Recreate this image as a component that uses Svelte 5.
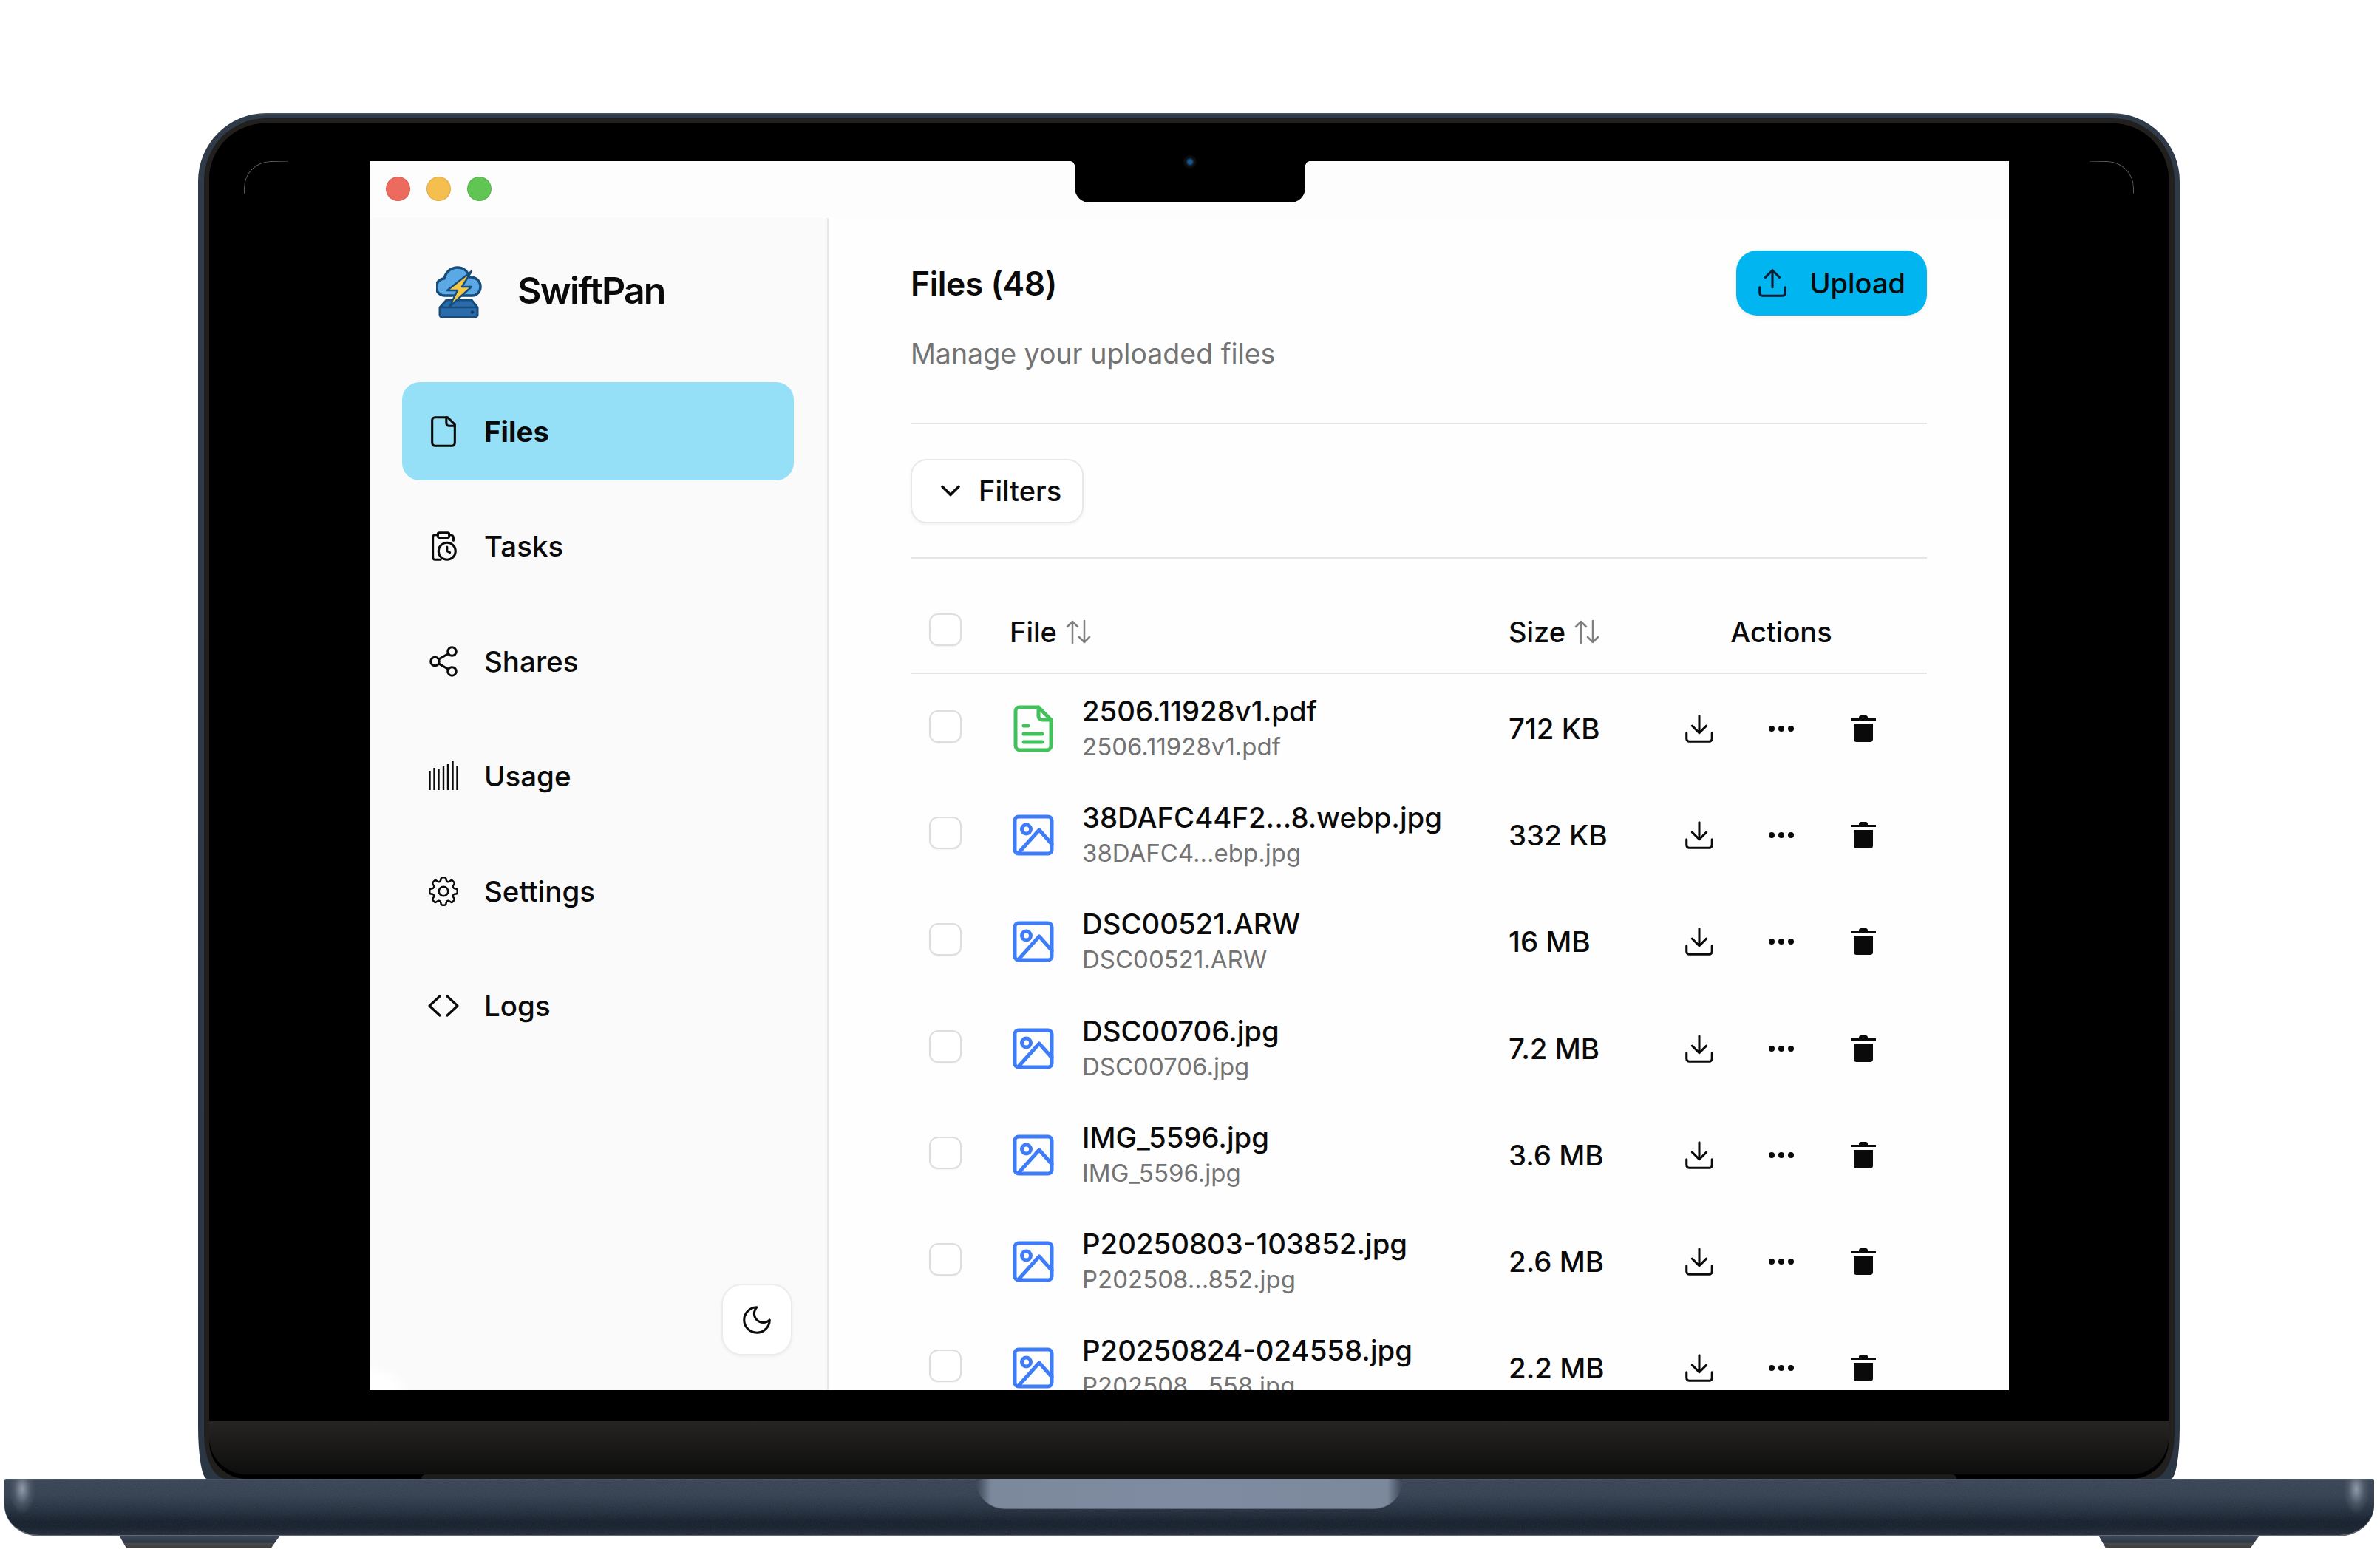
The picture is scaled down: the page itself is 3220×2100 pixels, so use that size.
<script>
  const nav = [
    { key: 'files', label: 'Files', active: true },
    { key: 'tasks', label: 'Tasks' },
    { key: 'shares', label: 'Shares' },
    { key: 'usage', label: 'Usage' },
    { key: 'settings', label: 'Settings' },
    { key: 'logs', label: 'Logs' }
  ];

  const files = [
    { name: '2506.11928v1.pdf', sub: '2506.11928v1.pdf', size: '712 KB', kind: 'doc' },
    { name: '38DAFC44F2...8.webp.jpg', sub: '38DAFC4...ebp.jpg', size: '332 KB', kind: 'image' },
    { name: 'DSC00521.ARW', sub: 'DSC00521.ARW', size: '16 MB', kind: 'image' },
    { name: 'DSC00706.jpg', sub: 'DSC00706.jpg', size: '7.2 MB', kind: 'image' },
    { name: 'IMG_5596.jpg', sub: 'IMG_5596.jpg', size: '3.6 MB', kind: 'image' },
    { name: 'P20250803-103852.jpg', sub: 'P202508...852.jpg', size: '2.6 MB', kind: 'image' },
    { name: 'P20250824-024558.jpg', sub: 'P202508...558.jpg', size: '2.2 MB', kind: 'image' }
  ];

  const usageBars = [
    { x: 1.5, top: 13 }, { x: 7.5, top: 9 }, { x: 13.5, top: 11 }, { x: 20, top: 6 },
    { x: 26, top: 4 }, { x: 32.5, top: 0 }, { x: 38.5, top: 6 }
  ];
</script>

{#snippet navIcon(key)}
  {#if key === 'files'}
    <svg class="ico" width="46" height="46" viewBox="0 0 24 24">
      <path d="M15 2H6a2 2 0 0 0-2 2v16a2 2 0 0 0 2 2h12a2 2 0 0 0 2-2V7Z" />
      <path d="M14 2v4a2 2 0 0 0 2 2h4" />
    </svg>
  {:else if key === 'tasks'}
    <svg class="ico" width="46" height="46" viewBox="0 0 24 24">
      <rect x="8" y="2.5" width="8" height="3.5" rx="1" />
      <path d="M16 4h1a2 2 0 0 1 2 2v2" />
      <path d="M8 4H6a1.500 1.500 0 0 0-1.500 1.500V20A1.500 1.500 0 0 0 6 21.500h4" />
      <circle cx="14.500" cy="15.500" r="6" />
      <path d="M14.500 12.500v3l2 1" />
    </svg>
  {:else if key === 'shares'}
    <svg class="ico" width="46" height="46" viewBox="0 0 24 24">
      <circle cx="18" cy="5" r="3" />
      <circle cx="6" cy="12" r="3" />
      <circle cx="18" cy="19" r="3" />
      <path d="m8.590 13.510 6.830 3.980M15.410 6.510l-6.820 3.980" />
    </svg>
  {:else if key === 'usage'}
    <svg class="bars" width="40" height="40" viewBox="0 0 40 40">
      {#each usageBars as b}
        <line x1={b.x} x2={b.x} y1={b.top} y2="39" />
      {/each}
    </svg>
  {:else if key === 'settings'}
    <svg class="ico thin" width="50" height="50" viewBox="0 0 24 24">
      <path d="M10.343 3.94c.09-.542.56-.94 1.11-.94h1.093c.55 0 1.02.398 1.11.94l.149.894c.07.424.384.764.78.93.398.164.855.142 1.205-.108l.737-.527a1.125 1.125 0 0 1 1.45.12l.773.774c.39.389.44 1.002.12 1.45l-.527.737c-.25.35-.272.806-.107 1.204.165.397.505.71.93.78l.893.15c.543.09.94.559.94 1.109v1.094c0 .55-.397 1.02-.94 1.11l-.894.149c-.424.07-.764.383-.929.78-.165.398-.143.854.107 1.204l.527.738c.32.447.269 1.06-.12 1.45l-.774.773a1.125 1.125 0 0 1-1.449.12l-.738-.527c-.35-.25-.806-.272-1.203-.107-.398.165-.71.505-.781.929l-.149.894c-.09.542-.56.94-1.11.94h-1.094c-.55 0-1.019-.398-1.11-.94l-.148-.894c-.071-.424-.384-.764-.781-.93-.398-.164-.854-.142-1.204.108l-.738.527c-.447.32-1.06.269-1.45-.12l-.773-.774a1.125 1.125 0 0 1-.12-1.45l.527-.737c.25-.35.272-.806.108-1.204-.165-.397-.506-.71-.93-.78l-.894-.15c-.542-.09-.94-.56-.94-1.109v-1.094c0-.55.398-1.02.94-1.11l.894-.149c.424-.07.765-.383.93-.78.165-.398.143-.854-.108-1.204l-.526-.738a1.125 1.125 0 0 1 .12-1.45l.773-.773a1.125 1.125 0 0 1 1.45-.12l.737.527c.35.25.807.272 1.204.107.397-.165.71-.505.78-.929l.15-.894Z" />
      <circle cx="12" cy="12" r="3" />
    </svg>
  {:else if key === 'logs'}
    <svg class="ico" width="44" height="44" viewBox="0 0 44 44">
      <path d="M17 9 3 22l14 13M27 9l14 13-14 13" stroke-width="3.200" />
    </svg>
  {/if}
{/snippet}

{#snippet sortIcon()}
  <svg class="sort" width="34" height="32" viewBox="0 0 34 32">
    <path d="M9 31V2M2 9l7-7 7 7M25 1v29M18 23l7 7 7-7" />
  </svg>
{/snippet}

<div class="stage">
  <div class="lid">
    <div class="gasket">
      <div class="bezel">
        <div class="glass">
          <span class="arc left"></span>
          <span class="arc right"></span>
          <div class="window">
            <span class="notch"></span>
            <div class="titlebar">
              <span class="light red"></span>
              <span class="light yellow"></span>
              <span class="light green"></span>
            </div>
            <div class="app">
              <aside class="sidebar">
                <div class="brand">
                  <svg class="logo" width="62" height="70" viewBox="0 0 62 70">
                    <path d="M14 46h34l8 10v10a3 3 0 0 1-3 3H8a3 3 0 0 1-3-3V56Z" fill="#2a6cab" stroke="#174d7c" stroke-width="3" stroke-linejoin="round" />
                    <path d="M6 56h49" stroke="#174d7c" stroke-width="2.500" />
                    <circle cx="49" cy="62.500" r="2.200" fill="#123c60" />
                    <path d="M12 40a11.500 11.500 0 0 1-1-23C13 8 20 2 29 2c8 0 14 5 16 13 8-1 15 5 15 13 0 7-5 12-11 12Z" fill="#5aa8e4" stroke="#174d7c" stroke-width="3.500" stroke-linejoin="round" />
                    <path d="M48 7 15 33h14L18 55l30-27H35Z" fill="#f6c744" stroke="#174d7c" stroke-width="2.400" stroke-linejoin="round" />
                  </svg>
                  <span class="wordmark">SwiftPan</span>
                </div>
                <nav>
                  {#each nav as item}
                    <a class="nav-item" class:active={item.active} href="#{item.key}">
                      <span class="nav-icon">{@render navIcon(item.key)}</span>
                      <span>{item.label}</span>
                    </a>
                  {/each}
                </nav>
                <button class="theme" aria-label="Toggle theme">
                  <svg class="ico" width="46" height="46" viewBox="0 0 24 24">
                    <path d="M12 3a6 6 0 0 0 9 9 9 9 0 1 1-9-9Z" />
                  </svg>
                </button>
              </aside>

              <main class="main">
                <header class="page-head">
                  <div class="title-row">
                    <h1>Files (48)</h1>
                    <button class="upload">
                      <svg class="ico navy" width="46" height="46" viewBox="0 0 24 24">
                        <path d="M12 15V3M7 8l5-5 5 5M3 15v4a2 2 0 0 0 2 2h14a2 2 0 0 0 2-2v-4" />
                      </svg>
                      <span>Upload</span>
                    </button>
                  </div>
                  <p class="subtitle">Manage your uploaded files</p>
                </header>

                <div class="filter-bar">
                  <button class="filters">
                    <svg class="ico heavy" width="44" height="44" viewBox="0 0 24 24"><path d="m6 9 6 6 6-6" /></svg>
                    <span>Filters</span>
                  </button>
                </div>

                <div class="table-head grid">
                  <span class="check-cell"><span class="check"></span></span>
                  <span class="th">File {@render sortIcon()}</span>
                  <span class="th">Size {@render sortIcon()}</span>
                  <span class="th center">Actions</span>
                </div>

                {#each files as f}
                  <div class="row grid">
                    <span class="check-cell"><span class="check"></span></span>
                    <div class="file">
                      <span class="file-icon">
                        {#if f.kind === 'doc'}
                          <svg width="56" height="64" viewBox="0 0 56 64" fill="none" stroke="#43c15c" stroke-width="5" stroke-linecap="round" stroke-linejoin="round">
                            <path d="M9 3h26l17 17v35a6 6 0 0 1-6 6H10a6 6 0 0 1-6-6V8a5 5 0 0 1 5-5Z" />
                            <path d="M35 3v12a5 5 0 0 0 5 5h12" />
                            <path d="M15 28h6M15 39h25M15 50h25" />
                          </svg>
                        {:else}
                          <svg width="56" height="56" viewBox="0 0 56 56" fill="none" stroke="#3f7cf7" stroke-width="5" stroke-linecap="round" stroke-linejoin="round">
                            <rect x="3" y="3" width="50" height="50" rx="5" />
                            <circle cx="18.500" cy="20" r="6" />
                            <path d="M8 52 36 21l17 19" />
                          </svg>
                        {/if}
                      </span>
                      <div class="names">
                        <span class="name">{f.name}</span>
                        <span class="sub">{f.sub}</span>
                      </div>
                    </div>
                    <span class="size">{f.size}</span>
                    <div class="actions">
                      <span class="act">
                        <svg class="ico" width="46" height="46" viewBox="0 0 24 24">
                          <path d="M12 3v12M7 10l5 5 5-5M3 15v4a2 2 0 0 0 2 2h14a2 2 0 0 0 2-2v-4" />
                        </svg>
                      </span>
                      <span class="act">
                        <svg width="36" height="10" viewBox="0 0 36 10" fill="#0a0a0a">
                          <circle cx="5" cy="5" r="4" /><circle cx="18" cy="5" r="4" /><circle cx="31" cy="5" r="4" />
                        </svg>
                      </span>
                      <span class="act">
                        <svg width="34" height="36" viewBox="0 0 34 36" fill="#0a0a0a">
                          <path d="M11 4V3a3 3 0 0 1 3-3h6a3 3 0 0 1 3 3v1h11v3H0V4Z" />
                          <path d="M4 11h26v21a4 4 0 0 1-4 4H8a4 4 0 0 1-4-4Z" />
                        </svg>
                      </span>
                    </div>
                  </div>
                {/each}
              </main>
            </div>
          </div>
          <span class="camera"></span>
        </div>
        <div class="chin"></div>
        <span class="lip"></span>
      </div>
    </div>
  </div>

  <div class="base">
    <svg class="grain" width="3206" height="78">
      <filter id="grain-noise">
        <feTurbulence type="fractalNoise" baseFrequency="0.7" numOctaves="2" />
        <feColorMatrix values="0 0 0 0 1  0 0 0 0 1  0 0 0 0 1  0.9 0 0 0 -0.25" />
      </filter>
      <rect width="3206" height="78" filter="url(#grain-noise)" />
    </svg>
    <span class="shine left"></span>
    <span class="shine right"></span>
    <span class="thumb"></span>
  </div>
  <div class="feet">
    <span class="foot"></span>
    <span class="foot"></span>
  </div>
</div>

<style>
  :global(body) {
    margin: 0;
    background: #fff;
  }

  .stage {
    width: 3220px;
    height: 2100px;
    padding-top: 153px;
    box-sizing: border-box;
    overflow: hidden;
    background: #fff;
    font-family: Inter, "Liberation Sans", sans-serif;
    color: #0a0a0a;
  }

  /* laptop shell */
  .lid {
    margin-left: 268px;
    width: 2681px;
    height: 1848px;
    box-sizing: border-box;
    padding: 7px 7px 0 8px;
    border-radius: 92px 92px 12px 12px / 92px 92px 70px 70px;
    background: linear-gradient(180deg, #4a5564 0, #303b49 3px, #2b3644 100%);
  }

  .gasket {
    height: 100%;
    box-sizing: border-box;
    padding: 7px 8px 0 7px;
    border-radius: 84px 84px 30px 30px / 84px 84px 60px 60px;
    background: #22201e;
  }

  .bezel {
    position: relative;
    height: 100%;
    display: flex;
    flex-direction: column;
    border-radius: 76px 76px 50px 50px / 76px 76px 50px 50px;
    overflow: hidden;
    background: #000;
  }

  .glass {
    position: relative;
    height: 1756px;
    flex: none;
    box-sizing: border-box;
    padding: 51px 216px 42px 217px;
    background: #000;
  }

  .camera {
    position: absolute;
    left: 1318px;
    top: 43px;
    width: 18px;
    height: 18px;
    border-radius: 50%;
    background: radial-gradient(circle, #17568f 0 20%, #0d1014 45%, #060708 80%, #000 100%);
  }

  .chin {
    flex: 1;
    margin-bottom: 6px;
    background: linear-gradient(180deg, #272523 0, #1c1b19 40%, #0e0e0e 100%);
    border-radius: 0 0 50px 50px;
  }

  .lip {
    position: absolute;
    left: 287px;
    right: 287px;
    bottom: 0;
    height: 6px;
    border-radius: 6px 6px 0 0;
    background: #1d1c1b;
  }

  .arc {
    position: absolute;
    top: 51px;
    width: 60px;
    height: 44px;
    box-sizing: border-box;
    border-top: 1px solid #666;
    border-radius: 36px 0 0 0;
    border-left: 1px solid #666;
    -webkit-mask-image: linear-gradient(135deg, #000 30%, transparent 80%);
    mask-image: linear-gradient(135deg, #000 30%, transparent 80%);
  }

  .arc.left {
    left: 47px;
  }

  .arc.right {
    right: 47px;
    transform: scaleX(-1);
  }

  .base {
    position: relative;
    margin-left: 6px;
    width: 3206px;
    height: 78px;
    box-sizing: border-box;
    overflow: hidden;
    border-radius: 2px 2px 48px 48px / 2px 2px 42px 42px;
    border-bottom: 2px solid #626873;
    background: linear-gradient(180deg, #4a5665 0, #3a4656 2px, #364252 22px, #273241 42px, #18212e 58px, #19222f 66px, #272f3c 100%);
  }

  .grain {
    position: absolute;
    left: 0;
    top: 0;
    opacity: 0.09;
  }

  .shine {
    position: absolute;
    top: 0;
    width: 44px;
    height: 50px;
  }

  .shine.left {
    left: 0;
    background: radial-gradient(ellipse 18px 34px at 24px 14px, #8f99aa 0, #58636f99 60%, transparent 100%);
  }

  .shine.right {
    right: 0;
    background: radial-gradient(ellipse 18px 34px at 20px 14px, #8f99aa 0, #58636f99 60%, transparent 100%);
  }

  .thumb {
    position: absolute;
    left: 1315px;
    top: 0;
    width: 576px;
    height: 40px;
    border-radius: 0 0 38px 38px;
    border-bottom: 1px solid #5c6676;
    background:
      linear-gradient(90deg, #3a4556 0, #7c889c 20px, #7f8ba0 50%, #7c889c calc(100% - 20px), #3a4556 100%);
  }

  .feet {
    display: flex;
    justify-content: space-between;
    padding: 0 164px 0 162px;
  }

  .foot {
    width: 216px;
    height: 15px;
    clip-path: polygon(0 0, 100% 0, 95% 100%, 4% 100%);
    background: linear-gradient(180deg, #3b4656 0, #2f3947 55%, #4b4b4b 60%, #3e3e3e 100%);
  }

  /* screen */
  .window {
    position: relative;
    height: 100%;
    display: flex;
    flex-direction: column;
    overflow: hidden;
    background: #fefefe;
  }

  .window::after {
    content: "";
    position: absolute;
    left: 0;
    bottom: 0;
    width: 56px;
    height: 36px;
    background: radial-gradient(ellipse 56px 36px at 0 100%, #fff 55%, #fff0 100%);
  }

  .notch {
    position: absolute;
    top: 0;
    left: 954px;
    width: 312px;
    height: 56px;
    background: #000;
    border-radius: 0 0 20px 20px;
  }

  .notch::before,
  .notch::after {
    content: "";
    position: absolute;
    top: 0;
    width: 6px;
    height: 6px;
  }

  .notch::before {
    left: -6px;
    background: radial-gradient(circle at 0 100%, #0000 5.500px, #000 6px);
  }

  .notch::after {
    right: -6px;
    background: radial-gradient(circle at 100% 100%, #0000 5.500px, #000 6px);
  }

  .titlebar {
    height: 77px;
    flex: none;
    display: flex;
    align-items: center;
    gap: 22px;
    padding-left: 22px;
    padding-bottom: 2px;
    box-sizing: border-box;
    background: #fdfdfd;
  }

  .light {
    width: 33px;
    height: 33px;
    border-radius: 50%;
    box-sizing: border-box;
    border: 1px solid #0000001a;
  }

  .red { background: #ec6a5e; }
  .yellow { background: #f4bf4f; }
  .green { background: #61c554; }

  .app {
    flex: 1;
    display: flex;
    min-height: 0;
  }

  .sidebar {
    width: 621px;
    flex: none;
    box-sizing: border-box;
    display: flex;
    flex-direction: column;
    padding: 65px 45px 47px 44px;
    border-right: 2px solid #e8e8e8;
    background: #fafafa;
  }

  .brand {
    display: flex;
    align-items: center;
    gap: 48px;
    height: 70px;
    margin: 0 0 87px 46px;
  }

  .wordmark {
    font-size: 50px;
    font-weight: 600;
    letter-spacing: -1.800px;
    position: relative;
    top: -2px;
  }

  nav {
    display: flex;
    flex-direction: column;
    gap: 22.600px;
  }

  .nav-item {
    display: flex;
    align-items: center;
    gap: 35px;
    height: 133px;
    padding-left: 36px;
    border-radius: 24px;
    color: #0a0a0a;
    text-decoration: none;
    font-size: 38.500px;
    font-weight: 500;
  }

  .nav-item.active {
    background: #95dff7;
    font-weight: 700;
  }

  .nav-icon {
    width: 40px;
    height: 50px;
    display: flex;
    align-items: center;
    justify-content: center;
  }

  .ico {
    flex: none;
    fill: none;
    stroke: #0a0a0a;
    stroke-width: 1.600;
    stroke-linecap: round;
    stroke-linejoin: round;
  }

  .ico.thin {
    stroke-width: 1.200;
  }

  .ico.heavy {
    stroke-width: 2;
  }

  .ico.navy {
    stroke: #0b1a33;
  }

  .bars {
    flex: none;
    stroke: #0a0a0a;
    stroke-width: 2.400;
  }

  .theme {
    margin: auto 2px 0 auto;
    width: 96px;
    height: 97px;
    padding: 0;
    display: flex;
    align-items: center;
    justify-content: center;
    border: 2px solid #ececec;
    border-radius: 28px;
    background: #fff;
    box-shadow: 0 2px 4px #0000000d;
  }

  /* content */
  .main {
    flex: 1;
    min-width: 0;
    padding: 44px 111px 0;
    overflow: hidden;
  }

  .page-head {
    height: 235px;
    box-sizing: border-box;
    border-bottom: 2px solid #e5e5e5;
  }

  .title-row {
    display: flex;
    align-items: center;
    justify-content: space-between;
  }

  h1 {
    margin: 2px 0 0;
    font-size: 44.500px;
    font-weight: 600;
    letter-spacing: -0.500px;
  }

  .upload {
    display: flex;
    align-items: center;
    gap: 27px;
    height: 88px;
    padding: 0 29px 0 26px;
    border: none;
    border-radius: 28px;
    background: #00b5f0;
    color: #0a0a0a;
    font: 500 38px Inter, sans-serif;
    box-shadow: 0 2px 6px #0000000f;
  }

  .subtitle {
    margin: 28px 0 0;
    font-size: 37.500px;
    line-height: 48px;
    color: #737373;
  }

  .filter-bar {
    height: 182px;
    box-sizing: border-box;
    display: flex;
    align-items: center;
    border-bottom: 2px solid #e5e5e5;
  }

  .filters {
    display: flex;
    align-items: center;
    gap: 16px;
    width: 234px;
    height: 87px;
    padding: 0 0 0 30px;
    box-sizing: border-box;
    border: 2px solid #e8e8e8;
    border-radius: 22px;
    background: #fff;
    color: #0a0a0a;
    font: 500 38px Inter, sans-serif;
    box-shadow: 0 2px 4px #0000000d;
  }

  .grid {
    display: grid;
    grid-template-columns: 134px 675px 172px 394px;
    align-items: center;
  }

  .table-head {
    height: 156px;
    margin-bottom: 2px;
    padding-top: 44px;
    box-sizing: border-box;
    border-bottom: 2px solid #e5e5e5;
  }

  .th {
    display: flex;
    align-items: center;
    gap: 12px;
    font-size: 38px;
    font-weight: 500;
  }

  .th.center {
    justify-content: center;
  }

  .sort {
    fill: none;
    stroke: #808080;
    stroke-width: 2.500;
    stroke-linecap: round;
    stroke-linejoin: round;
  }

  .check-cell {
    display: flex;
    padding-left: 25px;
    margin-bottom: 6px;
  }

  .check {
    width: 44px;
    height: 44px;
    box-sizing: border-box;
    border: 2px solid #dedede;
    border-radius: 12px;
    background: #fff;
    box-shadow: 0 1px 2px #0000000d;
  }

  .row {
    height: 144.200px;
  }

  .file {
    display: flex;
    align-items: center;
    gap: 38px;
    padding-left: 4px;
  }

  .file-icon {
    width: 56px;
    display: flex;
    justify-content: center;
  }

  .names {
    display: flex;
    flex-direction: column;
    white-space: nowrap;
  }

  .name {
    font-size: 38.300px;
    line-height: 48px;
    font-weight: 500;
  }

  .sub {
    font-size: 33px;
    line-height: 48px;
    color: #737373;
  }

  .size {
    font-size: 38.400px;
    font-weight: 500;
  }

  .actions {
    display: flex;
    justify-content: center;
  }

  .act {
    width: 111px;
    display: flex;
    align-items: center;
    justify-content: center;
  }
</style>
